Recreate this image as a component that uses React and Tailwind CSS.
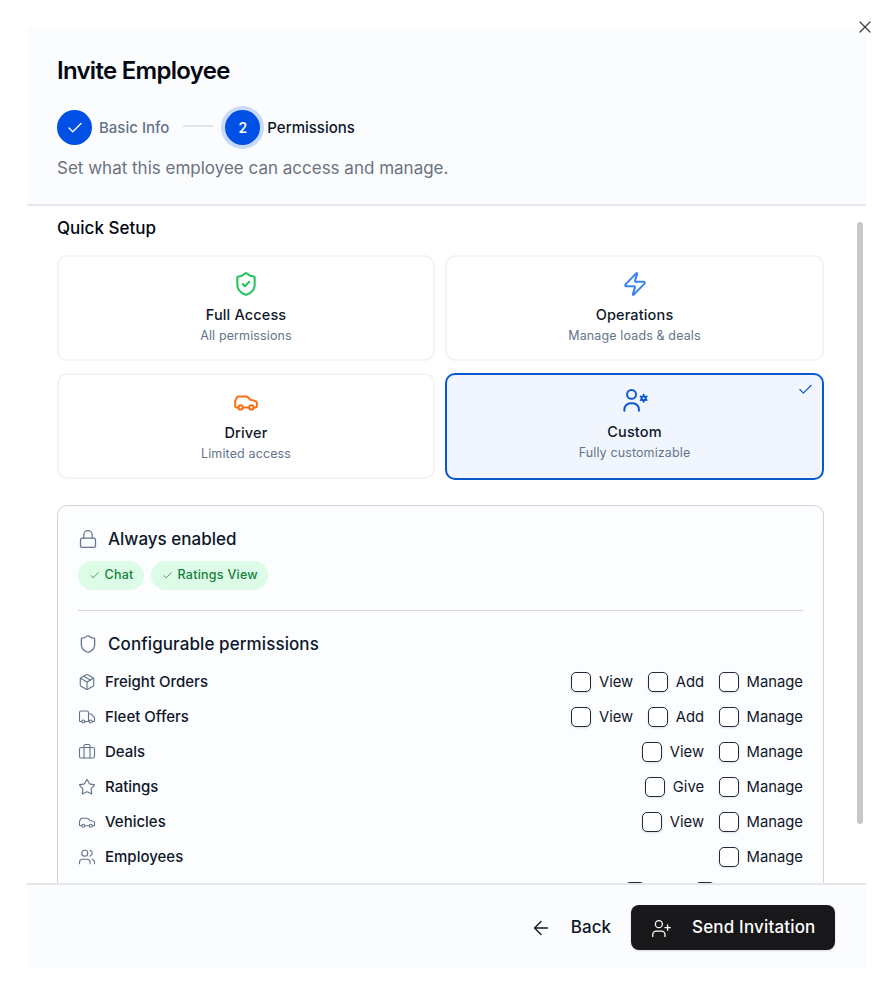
import React from "react";
import { X, Check, ShieldCheck, Zap, Car, Lock, Shield, Package, Truck, Briefcase, Star, Users, ArrowLeft, UserPlus, FileText } from "lucide-react";

function CustomIcon({ className, size }) {
  return (
    <svg className={className} width={size} height={size} viewBox="0 0 24 24" fill="none" stroke="currentColor" strokeWidth="1.8" strokeLinecap="round" strokeLinejoin="round">
      <circle cx="8.8" cy="5.9" r="4.1" />
      <path d="M2.2 21v-1.2a5.8 5.8 0 0 1 5.8-5.8h1.8a5.8 5.8 0 0 1 5.8 5.8V21" />
      <circle cx="20" cy="9.5" r="1.9" strokeWidth="2" />
      <path d="M20 6.2v.5M20 12.3v.5M17.1 7.8l.5.3M22.4 10.9l.5.3M17.1 11.2l.5-.3M22.4 8.1l.5-.3" strokeWidth="1.6" />
    </svg>
  );
}

function Card({ Icon, color, title, sub, selected }) {
  return (
    <div className={selected
      ? "relative flex h-[107px] flex-col items-center rounded-[10px] border-2 border-[#0b57d0] bg-[#f1f6fe] pt-[13px]"
      : "relative flex h-[106px] flex-col items-center rounded-[10px] border-2 border-[#f3f4f6] bg-white pt-[14px]"}>
      <Icon className={color} size={26} strokeWidth={1.9} />
      <div className="mt-[8px] text-[14.5px] font-medium leading-[20px] tracking-[0.01em] text-[#0f172a]">{title}</div>
      <div className="mt-[2px] text-[12.5px] leading-[18px] tracking-[0.01em] text-[#64748b]">{sub}</div>
      {selected && <Check className="absolute right-[8px] top-[6px] text-[#0b57d0]" size={17} strokeWidth={1.6} />}
    </div>
  );
}

function Pill({ label }) {
  return (
    <span className="flex h-[29px] items-center gap-[5px] rounded-full bg-[#dcfce7] px-[10.5px] text-[12.5px] font-medium tracking-[0.02em] text-[#15803d]">
      <Check size={11} strokeWidth={1.6} />
      {label}
    </span>
  );
}

function Tick() {
  return <span className="h-[20px] w-[20px] shrink-0 rounded-[5px] border border-[#1f2937] bg-white shadow-sm" />;
}

function Box({ label }) {
  return (
    <label className="flex items-center gap-[7.5px]">
      <Tick />
      <span className="text-[14.8px] leading-[20px] text-[#0f172a]">{label}</span>
    </label>
  );
}

function Row({ Icon, name, options }) {
  return (
    <div className="flex h-[35px] items-center">
      <Icon className="text-[#64748b]" size={18} strokeWidth={1.5} />
      <span className="ml-[9px] pt-[1px] text-[15px] font-medium leading-[20px] text-[#0f172a]">{name}</span>
      <div className="ml-auto flex items-center gap-[15px]">
        {options.map((o) => <Box key={o} label={o} />)}
      </div>
    </div>
  );
}

export default function App() {
  return (
    <div className="relative h-[994px] w-[893px] overflow-hidden bg-white p-[27px] font-['Inter',sans-serif]">
      <div className="relative flex h-[941px] w-[839px] flex-col">
        <header className="h-[179px] shrink-0 border-b-2 border-[#e5e7eb] bg-[#fbfcfe] pl-[30px] pt-[29px]">
          <h1 className="text-[24px] font-semibold leading-[30px] tracking-[-0.03em] text-[#030712]">Invite Employee</h1>
          <div className="mt-[24px] flex items-center">
            <span className="flex h-[35px] w-[35px] items-center justify-center rounded-full bg-[#0050e6] text-white">
              <Check size={18} strokeWidth={1.8} />
            </span>
            <span className="ml-[7px] pt-[1px] text-[15px] font-medium text-[#64748b]">Basic Info</span>
            <span className="mb-[3px] ml-[14px] h-[2px] w-[30px] bg-[#e2e4e8]" />
            <span className="ml-[12px] flex h-[35px] w-[35px] items-center justify-center rounded-full bg-[#0050e6] text-[14px] font-semibold text-white ring-4 ring-[#c9d9fa]">2</span>
            <span className="ml-[7px] pt-[1px] text-[15px] font-medium text-[#0f172a]">Permissions</span>
          </div>
          <p className="mt-[11px] text-[17px] leading-[24px] text-[#6b7280]">Set what this employee can access and manage.</p>
        </header>

        <main className="min-h-0 flex-1 overflow-hidden bg-white pl-[30px] pr-[42px]">
          <h2 className="mt-[10px] text-[17px] font-medium leading-[24px] text-[#030712]">Quick Setup</h2>
          <div className="mt-[15px] grid grid-cols-[378px_379px] gap-x-[10px] gap-y-[12px]">
            <Card Icon={ShieldCheck} color="text-[#22c55e]" title="Full Access" sub="All permissions" />
            <Card Icon={Zap} color="text-[#3b82f6]" title="Operations" sub="Manage loads & deals" />
            <Card Icon={Car} color="text-[#f97316]" title="Driver" sub="Limited access" />
            <Card Icon={CustomIcon} color="text-[#0b57d0]" title="Custom" sub="Fully customizable" selected />
          </div>

          <section className="mt-[25px] rounded-[10px] border border-[#d4d4d8] bg-[#fcfdff] px-[20px] pb-[20px] pt-[21px]">
            <div className="flex items-center gap-[10px]">
              <Lock className="text-[#64748b]" size={20} strokeWidth={1.5} />
              <span className="text-[17px] font-medium leading-[24px] text-[#0f172a]">Always enabled</span>
            </div>
            <div className="mt-[10px] flex gap-[7px]">
              <Pill label="Chat" />
              <Pill label="Ratings View" />
            </div>
            <div className="mt-[20px] h-px bg-[#d4d4d8]" />
            <div className="mt-[21px] flex items-center gap-[10px]">
              <Shield className="text-[#64748b]" size={20} strokeWidth={1.5} />
              <span className="text-[17px] font-medium leading-[24px] tracking-[0.005em] text-[#0f172a]">Configurable permissions</span>
            </div>
            <div className="mt-[8px]">
              <Row Icon={Package} name="Freight Orders" options={["View", "Add", "Manage"]} />
              <Row Icon={Truck} name="Fleet Offers" options={["View", "Add", "Manage"]} />
              <Row Icon={Briefcase} name="Deals" options={["View", "Manage"]} />
              <Row Icon={Star} name="Ratings" options={["Give", "Manage"]} />
              <Row Icon={Car} name="Vehicles" options={["View", "Manage"]} />
              <Row Icon={Users} name="Employees" options={["Manage"]} />
              <div className="flex h-[35px] items-center">
                <FileText className="text-[#64748b]" size={18} strokeWidth={1.5} />
                <div className="ml-auto flex items-center">
                  <Tick />
                  <span className="w-[50px]" />
                  <Tick />
                  <span className="w-[88px]" />
                </div>
              </div>
            </div>
          </section>
        </main>

        <footer className="flex h-[85px] shrink-0 items-center justify-end border-t-2 border-[#e5e7eb] bg-[#fbfcfe] pr-[31px] pt-[1px]">
          <button className="mr-[20px] flex items-center gap-[19px] pt-[1px] text-[17px] font-medium text-[#0f172a]">
            <ArrowLeft size={22} strokeWidth={1.5} />
            Back
          </button>
          <button className="flex h-[45px] w-[204px] items-center gap-[20px] rounded-[8px] bg-[#18181b] pl-[20px] pt-[2px] text-[17px] font-medium tracking-[0.01em] text-white shadow-sm">
            <UserPlus size={21} strokeWidth={1.5} />
            Send Invitation
          </button>
        </footer>

        <div className="absolute left-[830px] top-[195px] h-[602px] w-[6px] rounded-full bg-[#c8c8c8]" />
      </div>

      <button className="absolute right-[18px] top-[17px] text-[#3f3f46]">
        <X size={20} strokeWidth={1.5} />
      </button>
    </div>
  );
}
